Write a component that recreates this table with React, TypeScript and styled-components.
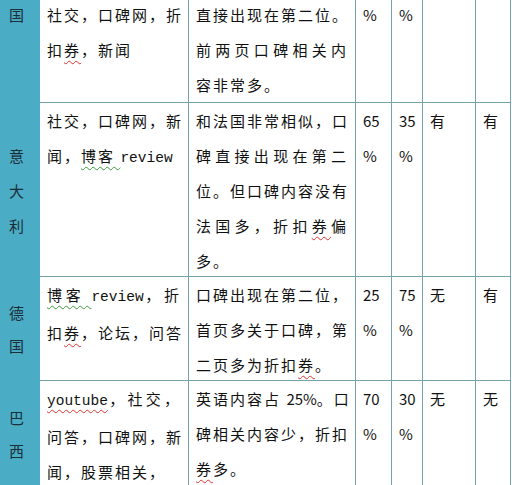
import React from "react";
import styled, { createGlobalStyle, css } from "styled-components";

const Global = createGlobalStyle`
  html, body { margin: 0; padding: 0; background: #ffffff; overflow: hidden; }
  body { width: 512px; height: 485px; }
`;

const LINE = "#74a3ab";
const BLUE = "#4bacc6";

const Table = styled.div`
  margin-top: -3px;
  display: grid;
  grid-template-columns: 40px 149px 167px 36px 31px 53px 35px;
  grid-template-rows: 106px 174px 104px 106px;
  font-family: "Noto Sans CJK SC", "Noto Sans", sans-serif;
  font-size: 15px;
  color: #111;
`;

const SideCell = styled.div<{ $top?: boolean; $gap: number }>`
  background: ${BLUE};
  color: #1b2f38;
  display: flex;
  flex-direction: column;
  justify-content: ${(p) => (p.$top ? "flex-start" : "center")};
  align-items: flex-start;
  padding-left: 9px;
  line-height: ${(p) => p.$gap}px;
`;

const Cell = styled.div<{ $tight?: boolean }>`
  box-sizing: border-box;
  border-right: 1px solid ${LINE};
  border-bottom: 1px solid ${LINE};
  padding: 0 7px;
  overflow: hidden;
  line-height: 35px;
  background: #fff;
  letter-spacing: ${(p) => (p.$tight ? "0" : "2px")};
`;

const Line = styled.div<{ $fill?: boolean }>`
  white-space: nowrap;
  text-align: left;
  ${(p) =>
    p.$fill &&
    css`
      text-align: justify;
      text-align-last: justify;
      text-justify: inter-character;
    `}
`;

const Latin = styled.span`
  font-family: "Liberation Mono", monospace;
  font-size: 14.5px;
  letter-spacing: 0;
`;

const Num = styled.span`
  letter-spacing: 0;
`;

const Squiggle = styled.span<{ $tone: "red" | "green" }>`
  text-decoration-line: underline;
  text-decoration-style: wavy;
  text-decoration-color: ${(p) => (p.$tone === "red" ? "#e0322f" : "#3c9a3c")};
  text-decoration-thickness: 1px;
  text-underline-offset: 4px;
`;

type LineSpec = { fill?: boolean; content: React.ReactNode };

const Quan = () => <Squiggle $tone="red">券</Squiggle>;
const BoKe = () => (
  <>
    <Squiggle $tone="green">博客 </Squiggle>
    <Latin>review</Latin>
  </>
);

const TextCell = ({ lines, tight }: { lines: LineSpec[]; tight?: boolean }) => (
  <Cell $tight={tight}>
    {lines.map((l, i) => (
      <Line key={i} $fill={l.fill}>
        {l.content}
      </Line>
    ))}
  </Cell>
);

const Side = ({ chars, top, gap = 33 }: { chars: string[]; top?: boolean; gap?: number }) => (
  <SideCell $top={top} $gap={gap}>
    {chars.map((c, i) => (
      <div key={i}>{c}</div>
    ))}
  </SideCell>
);

const rows: {
  side: string[];
  top?: boolean;
  gap?: number;
  c1: LineSpec[];
  c2: LineSpec[];
  c3: string[];
  c4: string[];
  c5: string;
  c6: string;
}[] = [
  {
    side: ["国"],
    top: true,
    gap: 35,
    c1: [
      { fill: true, content: "社交，口碑网，折" },
      { content: <>扣<Quan />，新闻</> },
    ],
    c2: [
      { fill: true, content: "直接出现在第二位。" },
      { fill: true, content: "前两页口碑相关内" },
      { content: "容非常多。" },
    ],
    c3: ["%"],
    c4: ["%"],
    c5: "",
    c6: "",
  },
  {
    side: ["意", "大", "利"],
    gap: 35,
    c1: [
      { fill: true, content: "社交，口碑网，新" },
      { content: <>闻，<BoKe /></> },
    ],
    c2: [
      { fill: true, content: "和法国非常相似，口" },
      { fill: true, content: "碑直接出现在第二" },
      { fill: true, content: "位。但口碑内容没有" },
      { fill: true, content: <>法国多，折扣<Quan />偏</> },
      { content: "多。" },
    ],
    c3: ["65", "%"],
    c4: ["35", "%"],
    c5: "有",
    c6: "有",
  },
  {
    side: ["德", "国"],
    c1: [
      { fill: true, content: <><BoKe />，折</> },
      { fill: true, content: <>扣<Quan />，论坛，问答</> },
    ],
    c2: [
      { fill: true, content: "口碑出现在第二位，" },
      { fill: true, content: "首页多关于口碑，第" },
      { content: <>二页多为折扣<Quan />。</> },
    ],
    c3: ["25", "%"],
    c4: ["75", "%"],
    c5: "无",
    c6: "有",
  },
  {
    side: ["巴", "西"],
    c1: [
      { fill: true, content: <><Squiggle $tone="red"><Latin>youtube</Latin></Squiggle>，社交，</> },
      { fill: true, content: "问答，口碑网，新" },
      { content: "闻，股票相关，" },
    ],
    c2: [
      { fill: true, content: <>英语内容占 <Num>25%</Num>。口</> },
      { fill: true, content: "碑相关内容少，折扣" },
      { content: <><Quan />多。</> },
    ],
    c3: ["70", "%"],
    c4: ["30", "%"],
    c5: "无",
    c6: "无",
  },
];

const toLines = (arr: string[]): LineSpec[] => arr.map((s) => ({ content: s }));

export default function App() {
  return (
    <>
      <Global />
      <Table>
        {rows.map((r, i) => (
          <React.Fragment key={i}>
            <Side chars={r.side} top={r.top} gap={r.gap} />
            <TextCell lines={r.c1} />
            <TextCell lines={r.c2} />
            <TextCell tight lines={toLines(r.c3)} />
            <TextCell tight lines={toLines(r.c4)} />
            <TextCell lines={toLines(r.c5 ? [r.c5] : [])} />
            <TextCell lines={toLines(r.c6 ? [r.c6] : [])} />
          </React.Fragment>
        ))}
      </Table>
    </>
  );
}
